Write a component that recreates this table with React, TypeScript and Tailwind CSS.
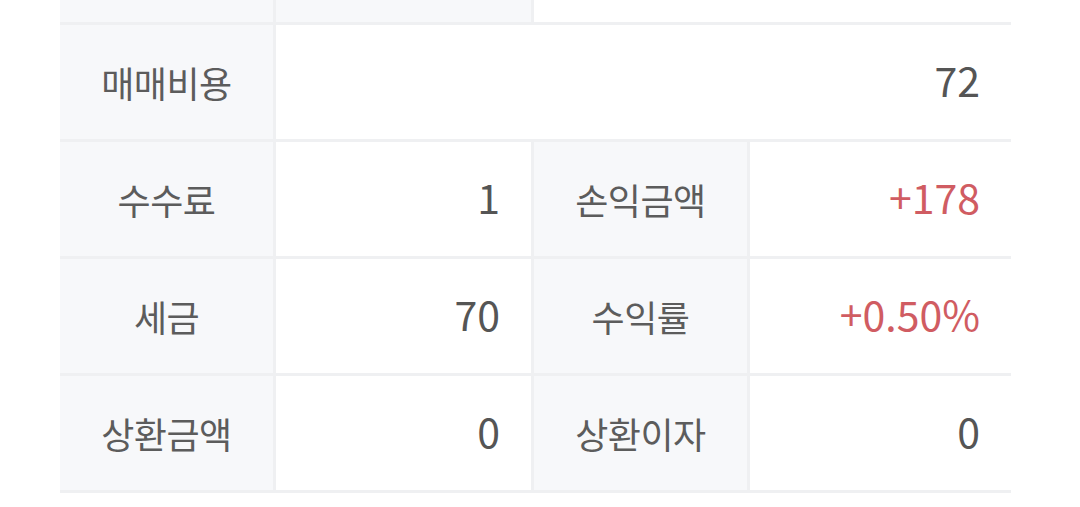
import { Fragment } from "react";

const ROWS = [
  [
    { label: "수수료", value: "1" },
    { label: "손익금액", value: "+178", up: true },
  ],
  [
    { label: "세금", value: "70" },
    { label: "수익률", value: "+0.50%", up: true },
  ],
  [
    { label: "상환금액", value: "0" },
    { label: "상환이자", value: "0" },
  ],
];

function Label({ children }: { children: React.ReactNode }) {
  return (
    <div className="bg-[#f7f8fa] flex items-center justify-center text-[36px] text-[#5c5c5c] tracking-[-0.5px]">
      {children}
    </div>
  );
}

function Value({ children, up, span }: { children: React.ReactNode; up?: boolean; span?: boolean }) {
  return (
    <div
      className={`bg-white flex items-center justify-end pr-[31px] pb-[5px] text-[41px] ${span ? "col-span-3" : ""} ${up ? "text-[#d05c62]" : "text-[#555555]"}`}
    >
      {children}
    </div>
  );
}

export default function App() {
  return (
    <main
      className="min-h-[507px] bg-white pl-[60px]"
      style={{ fontFamily: '"Noto Sans CJK KR", "Noto Sans", sans-serif' }}
    >
      <div className="w-[951px] grid grid-cols-[213px_255px_213px_261px] grid-rows-[22px_114px_114px_114px_114px] gap-[3px] bg-[#eff0f2] pb-[3px]">
        <div className="bg-[#f7f8fa]" />
        <div className="bg-[#f7f8fa]" />
        <div className="bg-white col-span-2" />

        <Label>매매비용</Label>
        <Value span>72</Value>

        {ROWS.map((row) =>
          row.map((c) => (
            <Fragment key={c.label}>
              <Label>{c.label}</Label>
              <Value up={c.up}>{c.value}</Value>
            </Fragment>
          ))
        )}
      </div>
    </main>
  );
}
